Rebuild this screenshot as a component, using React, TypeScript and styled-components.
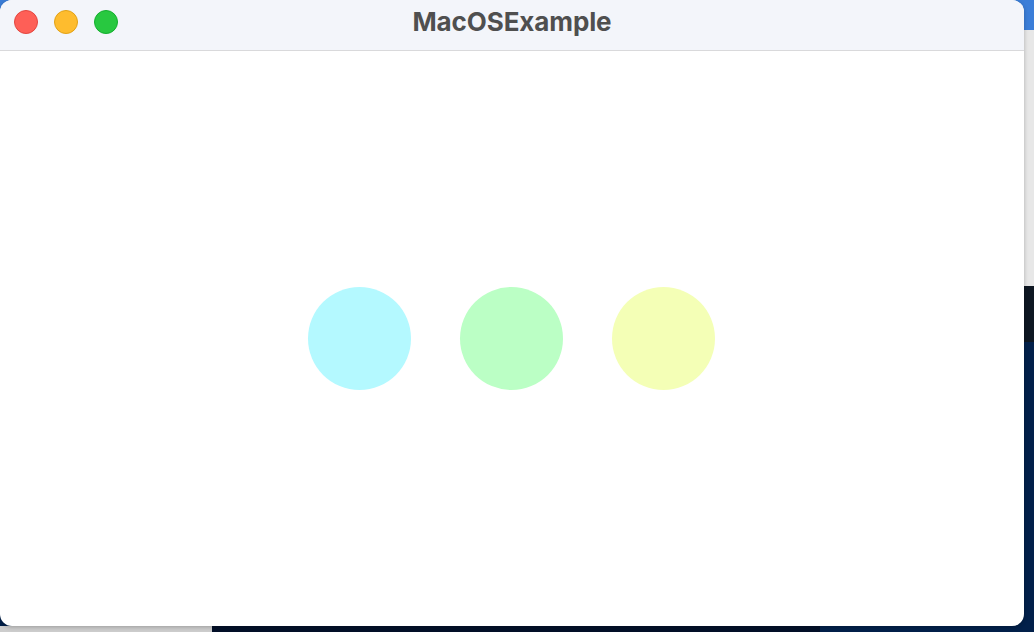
import React from "react";
import styled, { createGlobalStyle } from "styled-components";

const GlobalStyle = createGlobalStyle`
  html, body { margin: 0; padding: 0; }
  body { font-family: Inter, "Noto Sans", sans-serif; }
`;

const Desktop = styled.div`
  width: 1034px;
  height: 632px;
  overflow: hidden;
  background:
    linear-gradient(to right, #cdcdcd 0 212px, #031029 212px 820px, #02204a 820px) left bottom / 100% 6px no-repeat,
    linear-gradient(to bottom, #3b7ed8 0 30px, #e7e7e7 30px 286px, #0e1722 286px 342px, #02204a 342px);
`;

const Window = styled.div`
  width: 1024px;
  height: 626px;
  border-radius: 12px;
  overflow: hidden;
  background: #ffffff;
  display: flex;
  flex-direction: column;
  box-shadow: 0 1px 4px rgba(0, 0, 0, 0.25);
`;

const TitleBar = styled.div`
  height: 50px;
  flex: none;
  background: #f3f5fa;
  border-bottom: 1px solid #d9d9db;
  display: grid;
  grid-template-columns: 1fr auto 1fr;
  align-items: center;
`;

const Lights = styled.div`
  display: flex;
  gap: 16px;
  padding-left: 14px;
  margin-top: -6px;
`;

const Light = styled.span<{ $fill: string; $edge: string }>`
  width: 24px;
  height: 24px;
  border-radius: 50%;
  box-sizing: border-box;
  background: ${(p) => p.$fill};
  border: 1px solid ${(p) => p.$edge};
`;

const Title = styled.div`
  font-family: Inter, "Noto Sans", sans-serif;
  font-weight: 700;
  font-size: 26px;
  color: #4f4f4f;
  margin-top: -8px;
  letter-spacing: -0.1px;
`;

const Content = styled.div`
  flex: 1;
  display: flex;
  align-items: center;
  justify-content: center;
  gap: 49px;
  padding-right: 2px;
`;

const Dot = styled.div<{ $color: string }>`
  width: 103px;
  height: 103px;
  border-radius: 50%;
  background: ${(p) => p.$color};
`;

export default function App() {
  return (
    <>
      <GlobalStyle />
      <Desktop>
        <Window>
          <TitleBar>
            <Lights>
              <Light $fill="#fe5f57" $edge="#e2463f" />
              <Light $fill="#febc2e" $edge="#e1a116" />
              <Light $fill="#28c840" $edge="#14ae2e" />
            </Lights>
            <Title>MacOSExample</Title>
            <div />
          </TitleBar>
          <Content>
            <Dot $color="#b4f9ff" />
            <Dot $color="#bbffc5" />
            <Dot $color="#f4ffb6" />
          </Content>
        </Window>
      </Desktop>
    </>
  );
}
